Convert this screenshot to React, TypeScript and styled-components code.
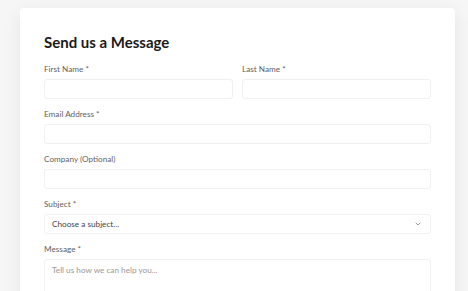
import { FC } from 'react';
import styled, { createGlobalStyle } from 'styled-components';
import { ChevronDown } from 'lucide-react';

const GlobalStyle = createGlobalStyle`
	body {
		margin: 0;
		background: #f6f6f6;
		font-family: Lato, 'Noto Sans', sans-serif;
	}
`;

const Page = styled.div`
	padding: 8px 13px 0 20px;
	height: 291px;
	box-sizing: border-box;
	overflow: hidden;
`;

const Card = styled.div`
	background: #ffffff;
	border-radius: 4px 4px 0 0;
	box-shadow: 0 4px 18px rgba(0, 0, 0, 0.07);
	padding: 24px 24px 0;
	height: 300px;
	box-sizing: border-box;
`;

const Title = styled.h2`
	margin: 0 0 11px;
	font-size: 15px;
	line-height: 20px;
	font-weight: 700;
	color: #1a1a1a;
`;

const Row = styled.div`
	display: grid;
	grid-template-columns: 1fr 1fr;
	gap: 9px;
`;

const Field = styled.div`
	display: flex;
	flex-direction: column;
	margin-bottom: 9px;
`;

const Label = styled.label`
	font-size: 8.2px;
	line-height: 12px;
	color: #5f5f5f;
	margin-bottom: 4px;
`;

const Input = styled.input`
	height: 20px;
	box-sizing: border-box;
	border: 1px solid #f0f0f0;
	border-radius: 3px;
	background: #fff;
	padding: 0 10px;
	font-family: inherit;
	font-size: 8.2px;
	outline: none;
`;

const SelectBox = styled.div`
	height: 20px;
	box-sizing: border-box;
	border: 1px solid #f0f0f0;
	border-radius: 3px;
	display: flex;
	align-items: center;
	justify-content: space-between;
	padding: 0 8px 0 7px;
	font-size: 8.2px;
	color: #444;
`;

const TextArea = styled.div`
	height: 60px;
	box-sizing: border-box;
	border: 1px solid #f0f0f0;
	border-radius: 3px;
	padding: 5px 7px;
	font-size: 8.2px;
	color: #999;
`;

const FieldBlock: FC<{ label: string; children: React.ReactNode }> = ({ label, children }) => (
	<Field>
		<Label>{label}</Label>
		{children}
	</Field>
);

const App: FC = () => (
	<>
		<GlobalStyle />
		<Page>
			<Card>
				<Title>Send us a Message</Title>
				<Row>
					<FieldBlock label="First Name *">
						<Input />
					</FieldBlock>
					<FieldBlock label="Last Name *">
						<Input />
					</FieldBlock>
				</Row>
				<FieldBlock label="Email Address *">
					<Input />
				</FieldBlock>
				<FieldBlock label="Company (Optional)">
					<Input />
				</FieldBlock>
				<FieldBlock label="Subject *">
					<SelectBox>
						<span>Choose a subject...</span>
						<ChevronDown size={8} color="#666" strokeWidth={2} />
					</SelectBox>
				</FieldBlock>
				<FieldBlock label="Message *">
					<TextArea>Tell us how we can help you...</TextArea>
				</FieldBlock>
			</Card>
		</Page>
	</>
);

export default App;
